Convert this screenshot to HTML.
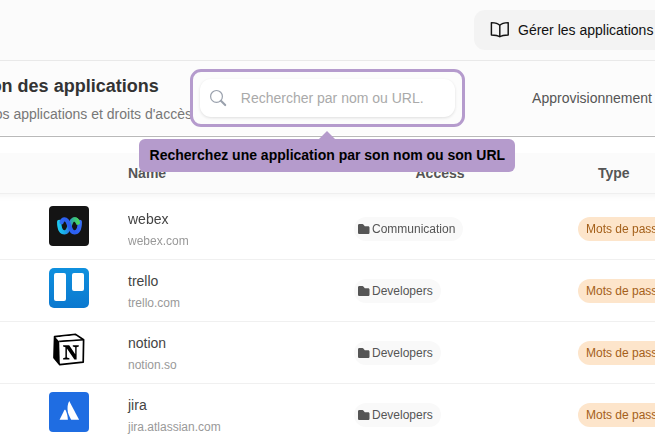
<!DOCTYPE html>
<html><head><meta charset="utf-8">
<style>
*{margin:0;padding:0;box-sizing:border-box}
html,body{width:655px;height:438px;overflow:hidden;background:#fff;font-family:"Liberation Sans",sans-serif}
.a{position:absolute;white-space:nowrap}
#top{position:absolute;left:0;top:0;width:655px;height:60px;background:#fbfbfb}
#l60{position:absolute;left:0;top:60px;width:655px;height:1px;background:#e9e9e9;box-shadow:0 1px 1px rgba(0,0,0,0.025)}
#sec{position:absolute;left:0;top:61px;width:655px;height:74px;background:#fcfcfc}
#l136{position:absolute;left:0;top:136px;width:655px;height:1px;background:#b9b9b9}
#btn{position:absolute;left:474px;top:10px;width:220px;height:40px;border-radius:11px;background:#f3f3f3}
.t14{font-size:14px;line-height:16px}
.t12{font-size:12px;line-height:14px}
.t18{font-size:18px;line-height:20px}
#thead{position:absolute;left:-20px;top:153px;width:700px;height:41px;background:#fbfbfb;border-bottom:1px solid #efefef;box-shadow:0 4px 6px -1px rgba(0,0,0,0.035)}
.sep{position:absolute;left:0;width:655px;height:1px;background:#f0f0f0}
.ico{position:absolute;left:49px;width:40px;height:40px;border-radius:4px}
.nm{left:128px;color:#444}
.dm{left:128px;color:#999}
.chip{position:absolute;left:354px;height:24px;border-radius:12px;background:#f9f9f9;padding-left:18px;padding-right:8px;color:#555;font-size:12px;line-height:24px}
.chip svg{position:absolute;left:4.4px;top:6.8px}
.badge{position:absolute;left:578px;height:24px;width:140px;border-radius:12px;background:#fde5cb;color:#a4601a;font-size:12px;line-height:24px;padding-left:8px}
</style></head><body>
<div id="top"></div>
<div id="btn"></div>
<svg class="a" style="left:490px;top:21px" width="20" height="18" viewBox="0 0 20 18">
 <path d="M9.8 4.4 C8.2 2.4 5.4 1.6 1.4 1.6 V13.9 C5.2 13.9 8 14.4 9.8 15.8 C11.6 14.4 14.4 13.9 18.2 13.9 V1.6 C14.2 1.6 11.4 2.4 9.8 4.4 Z M9.8 4.4 V15.8" fill="none" stroke="#111" stroke-width="1.45" stroke-linejoin="round"/>
</svg>
<div class="a t14" style="left:518px;top:22px;color:#111">Gérer les applications</div>
<div id="l60"></div>
<div id="sec"></div>
<div class="a t18" style="left:-54.4px;top:76px;color:#333;font-weight:700">Gestion des applications</div>
<div class="a t14" style="left:-54.3px;top:105.8px;color:#777">Gérez vos applications et droits d'accès</div>
<div class="a t14" style="left:532.1px;top:90px;color:#555">Approvisionnement</div>
<div id="l136"></div>

<div id="thead"></div>
<div class="a t14" style="left:128px;top:165px;color:#555;font-weight:700">Name</div>
<div class="a t14" style="left:415.5px;top:165px;color:#555;font-weight:700">Access</div>
<div class="a t14" style="left:598px;top:165px;color:#555;font-weight:700">Type</div>

<div class="sep" style="top:259px"></div>
<div class="sep" style="top:321px"></div>
<div class="sep" style="top:383px"></div>
<div id="rows" style="position:absolute;left:0;top:195px;width:655px;height:64px;overflow:hidden;will-change:transform"><div style="position:absolute;left:0;top:-195px;width:655px;height:438px">

<div class="ico" style="top:206px;background:#141414"></div>
<svg class="a" style="left:49px;top:206px" width="40" height="40" viewBox="0 0 40 40">
<defs>
<linearGradient id="wgA" gradientUnits="userSpaceOnUse" x1="9" y1="0" x2="30" y2="0"><stop offset="0" stop-color="#1ecaf2"/><stop offset="0.3" stop-color="#19ace9"/><stop offset="0.5" stop-color="#2a80e8"/><stop offset="0.72" stop-color="#33b58f"/><stop offset="1" stop-color="#4cd85a"/></linearGradient>
<linearGradient id="wgB" gradientUnits="userSpaceOnUse" x1="31" y1="14" x2="12" y2="26"><stop offset="0" stop-color="#3a70f6"/><stop offset="0.5" stop-color="#2b5ef0"/><stop offset="1" stop-color="#3272f5"/></linearGradient>
</defs>
<path d="M10.2 15.8 C10.2 23 12.4 26.4 15.6 26.4 C18.4 26.4 19.5 23.4 20.5 20.2 C21.5 17 22.6 13.3 25.4 13.3 C27.2 13.3 28.4 14.8 28.9 16.6" fill="none" stroke="url(#wgA)" stroke-width="4.3" stroke-linecap="round"/>
<path d="M30.8 15.8 C30.8 23 28.6 26.4 25.4 26.4 C22.6 26.4 21.5 23.4 20.5 20.2 C19.5 17 18.4 13.3 15.6 13.3 C14 13.3 13 14.6 12.6 16.2" fill="none" stroke="url(#wgB)" stroke-width="4.3" stroke-linecap="round"/>
<path d="M25.4 13.3 C27.2 13.3 28.4 14.8 28.9 16.6" fill="none" stroke="url(#wgA)" stroke-width="4.3" stroke-linecap="round"/>
</svg>
<div class="a t14 nm" style="top:211px">webex</div>
<div class="a t12 dm" style="top:233.5px">webex.com</div>
<div class="chip" style="top:217px"><svg width="12" height="10" viewBox="0 0 12 10"><path d="M1.3 10 H10.2 C10.9 10 11.5 9.4 11.5 8.7 V3.6 C11.5 2.9 10.9 2.3 10.2 2.3 H6.8 L5.6 0.7 C5.3 0.3 4.9 0 4.4 0 H1.3 C0.6 0 0 0.6 0 1.3 V8.7 C0 9.4 0.6 10 1.3 10 Z" fill="#555"/></svg>Communication</div>
<div class="badge" style="top:217px">Mots de passe</div>
</div></div>

<div class="ico" style="top:268px;background:linear-gradient(#0f90de,#0b78cf);border-radius:5px"></div>
<div class="a" style="left:54px;top:273px;width:12.3px;height:27.5px;border-radius:2px;background:#fff"></div>
<div class="a" style="left:71.6px;top:273px;width:12.3px;height:17.8px;border-radius:2px;background:#fff"></div>
<div class="a t14 nm" style="top:273px">trello</div>
<div class="a t12 dm" style="top:295.5px">trello.com</div>
<div class="chip" style="top:279px"><svg width="12" height="10" viewBox="0 0 12 10"><path d="M1.3 10 H10.2 C10.9 10 11.5 9.4 11.5 8.7 V3.6 C11.5 2.9 10.9 2.3 10.2 2.3 H6.8 L5.6 0.7 C5.3 0.3 4.9 0 4.4 0 H1.3 C0.6 0 0 0.6 0 1.3 V8.7 C0 9.4 0.6 10 1.3 10 Z" fill="#555"/></svg>Developers</div>
<div class="badge" style="top:279px">Mots de passe</div>

<svg class="a" style="left:45px;top:326px" width="48" height="48" viewBox="0 0 48 48">
<path d="M9.6 10.6 L30.6 8.4 L38.6 13.8 L38.2 36.2 L14.8 38.6 L9 31.6 Z" fill="#fff" stroke="#000" stroke-width="1.7" stroke-linejoin="round"/>
<path d="M9.6 10.6 L14.2 15.4 L14.8 38.6 L9 31.6 Z" fill="#000"/>
<path d="M14.2 15.4 L38.6 13.8" stroke="#000" stroke-width="1.6" fill="none"/>
<path d="M12.4 11.2 L29.5 9.6 L34 12.8 L15 14.2 Z" fill="#fff"/>
<path d="M18.1 19.2 H24.2 L30.2 28.2 V21.2 L27.8 20.6 V19.2 H33.8 V20.6 L31.6 21.2 V33.4 H29.4 L21.9 22.6 V31.6 L24.4 32.2 V33.4 H18.1 V32.2 L20.4 31.6 V21.2 L18.1 20.6 Z" fill="#000"/>
</svg>
<div class="a t14 nm" style="top:335px">notion</div>
<div class="a t12 dm" style="top:357.5px">notion.so</div>
<div class="chip" style="top:341px"><svg width="12" height="10" viewBox="0 0 12 10"><path d="M1.3 10 H10.2 C10.9 10 11.5 9.4 11.5 8.7 V3.6 C11.5 2.9 10.9 2.3 10.2 2.3 H6.8 L5.6 0.7 C5.3 0.3 4.9 0 4.4 0 H1.3 C0.6 0 0 0.6 0 1.3 V8.7 C0 9.4 0.6 10 1.3 10 Z" fill="#555"/></svg>Developers</div>
<div class="badge" style="top:341px">Mots de passe</div>

<div class="ico" style="top:392px;background:#1f6de2"></div>
<svg class="a" style="left:45px;top:388px" width="48" height="48" viewBox="0 0 48 48">
<path d="M24.2 13.1 L34.1 31.7 H26.2 C24.9 29.3 23.6 26.8 22.9 24.2 C22 20.6 22.6 16.2 24.2 13.1 Z" fill="#fff"/>
<path d="M19.4 22 C19.7 21.5 20.2 21.5 20.5 22 C21.8 24.5 22.6 27.5 22.9 31.7 H14.6 Z" fill="#fff"/>
</svg>
<div class="a t14 nm" style="top:397px">jira</div>
<div class="a t12 dm" style="top:419.5px">jira.atlassian.com</div>
<div class="chip" style="top:403px"><svg width="12" height="10" viewBox="0 0 12 10"><path d="M1.3 10 H10.2 C10.9 10 11.5 9.4 11.5 8.7 V3.6 C11.5 2.9 10.9 2.3 10.2 2.3 H6.8 L5.6 0.7 C5.3 0.3 4.9 0 4.4 0 H1.3 C0.6 0 0 0.6 0 1.3 V8.7 C0 9.4 0.6 10 1.3 10 Z" fill="#555"/></svg>Developers</div>
<div class="badge" style="top:403px">Mots de passe</div>


<!-- tour highlight -->
<div class="a" style="left:190px;top:69px;width:275px;height:58px;border:3px solid #b59bcd;border-radius:11px"></div>
<div class="a" style="left:200px;top:79px;width:255px;height:38px;border-radius:11px;background:#fff;box-shadow:0 1px 3px rgba(0,0,0,0.12)"></div>
<svg class="a" style="left:207px;top:87px" width="22" height="22" viewBox="0 0 22 22"><circle cx="9.5" cy="9.4" r="5.9" fill="none" stroke="#9aa1ad" stroke-width="1.2"/><path d="M13.9 13.8 L18.2 18.1" stroke="#9aa1ad" stroke-width="2.1" stroke-linecap="round"/></svg>
<div class="a t14" style="left:240.8px;top:90.1px;color:#aaa">Rechercher par nom ou URL.</div>

<!-- tooltip -->
<div class="a" style="left:139px;top:139px;width:376px;height:33px;border-radius:6px;background:#b59bcc"></div>
<svg class="a" style="left:318px;top:130px" width="18" height="10" viewBox="0 0 18 10"><path d="M0 10 L9 1 L18 10 Z" fill="#b59bcc"/></svg>
<div class="a t14" style="left:149.6px;top:146.6px;color:#000;font-weight:700">Recherchez une application par son nom ou son URL</div>
</body></html>
